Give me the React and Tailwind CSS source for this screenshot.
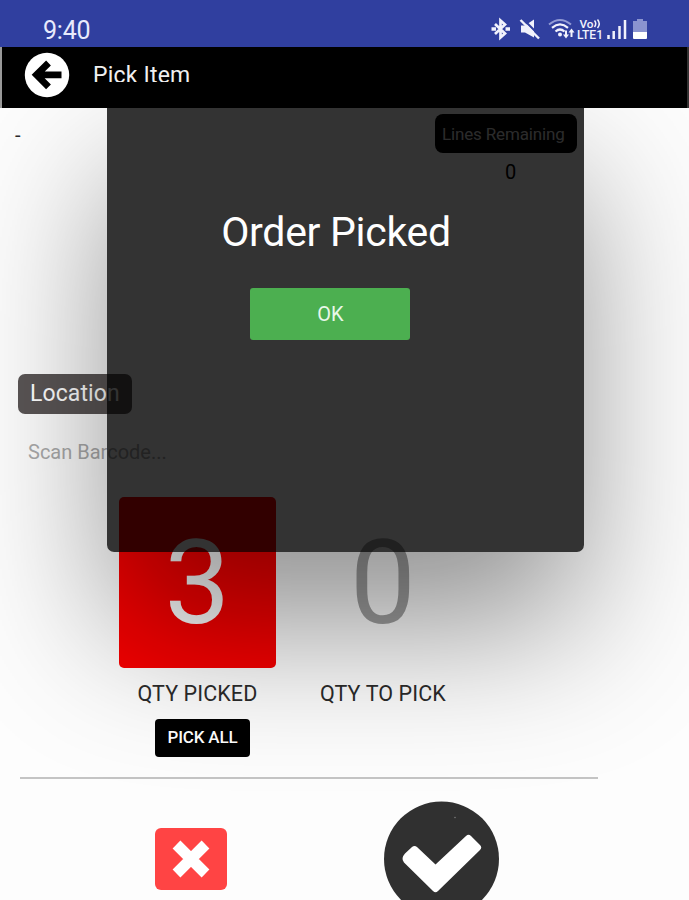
function StatusIcons() {
  return (
    <svg className="ml-[397px] mt-[17px] h-6 w-40" viewBox="0 0 160 24" fill="none" stroke="#f1f2fc">
      {/* bluetooth */}
      <path d="M5 7 15 16.500 10.500 20.500V3.500L15 7.500 5 17" strokeWidth="2.700" />
      <path d="M1.500 12H6M15.500 12H20" strokeWidth="3.400" />
      {/* muted speaker */}
      <path d="M31 8.500h4l9-6v18l-9-5h-4z" fill="#f1f2fc" stroke="none" />
      <path d="M32.500 1.500 51 20" stroke="#303f9f" strokeWidth="2.200" />
      <path d="M30.500 3 49 21.500" strokeWidth="2.400" />
      {/* wifi */}
      <path d="M59 7.500Q70 -1.500 81 7.500" strokeWidth="2" stroke="#929bd5" />
      <path d="M62 10.800Q70 4 78 10.800M65.500 14.500Q70 10.500 74.500 14.500" strokeWidth="2.200" />
      <circle cx="70" cy="17.500" r="2" fill="#f1f2fc" stroke="none" />
      <path d="M76 13.500v6M81.500 20v-6" strokeWidth="2" />
      <path d="m73 17.500 3 4 3-4zM78.500 15.500l3-4 3 4z" fill="#f1f2fc" stroke="none" />
      {/* carrier */}
      <g fill="#f1f2fc" stroke="none" fontFamily="Roboto, sans-serif" fontWeight="500">
        <text x="89.500" y="10.500" fontSize="11" textLength="14" lengthAdjust="spacingAndGlyphs">Vo</text>
        <text x="87" y="22" fontSize="12" textLength="26" lengthAdjust="spacingAndGlyphs">LTE1</text>
      </g>
      <path d="M104.500 3.500q2.500 3 0 6.500M107.500 2.500q3.500 4.300 0 8.500" strokeWidth="1.500" />
      {/* signal */}
      <path d="M118.500 18v4M123.700 14v8M129.500 9v13M135 3v19" strokeWidth="2.500" />
      {/* battery */}
      <path d="M147 2h6v2h4v11h-14V4h4z" fill="#8b94d0" stroke="none" />
      <path d="M143 15h14v6q0 1-1 1h-12q-1 0-1-1z" fill="#fff" stroke="none" />
    </svg>
  );
}

function Header() {
  return (
    <header className="relative z-20 h-[108px] bg-black">
      <div className="flex h-[47px] bg-[#303f9f]">
        <span className="ml-[43px] mt-[16px] w-[50px] text-[25px] leading-[30px] tracking-[-0.2px] text-[#e8eafc]">9:40</span>
        <StatusIcons />
      </div>
      <div className="flex h-[61px] border-x-2 border-l-[#999] border-r-[#333]">
        <svg className="ml-[22px] mt-[5px] h-[46px] w-[46px]" viewBox="0 0 46 46">
          <circle cx="23" cy="23" r="22.200" fill="#fff" />
          <path d="M37.500 22.800H13M24.500 11 12.500 22.800l12 12" fill="none" stroke="#000" strokeWidth="6.800" />
        </svg>
        <h1 className="ml-[23px] mt-[13px] h-[22px] overflow-hidden text-[23px] leading-[31px] tracking-[0.2px] text-[#f0f0f0]">Pick Item</h1>
      </div>
    </header>
  );
}

function Modal() {
  return (
    <div className="absolute left-[107px] top-[98px] z-10 flex h-[454px] w-[477px] flex-col items-center rounded-[7px] bg-black/80 pr-[32px] pt-[107px] shadow-[0_78px_150px_-4px_rgba(0,0,0,0.43)]">
      <h2 className="ml-[13px] whitespace-nowrap text-[41px] leading-[54px] tracking-[-0.3px] text-white">Order Picked</h2>
      <button className="mt-[29px] h-[52px] w-[160px] shrink-0 rounded-[3px] bg-[#4caf50] pl-[2px] text-[20px] text-[#e9f7e9]">OK</button>
    </div>
  );
}

export default function App() {
  return (
    <div className="relative h-[900px] w-[689px] overflow-hidden bg-[#fdfdfd] font-[Roboto,sans-serif] text-[#2b2b2b]">
      <Header />
      <Modal />
      <section className="flex h-[266px] justify-between pr-[112px]">
        <span className="ml-[15px] mt-[14px] text-[20px] leading-[26px]">-</span>
        <div className="mt-[6px] flex w-[142px] flex-col items-center">
          <span className="flex h-[39px] w-full items-center rounded-[8px] bg-black pl-[7px] pt-[2px] text-[17px] tracking-[-0.150px] text-[#d8d8d8]">Lines Remaining</span>
          <span className="ml-[9px] mt-[6px] text-[20px] leading-[26px] text-black">0</span>
        </div>
      </section>
      <section className="h-[123px] pl-[18px]">
        <div className="flex h-[40px] w-[114px] items-center rounded-[7px] bg-[#5a5555] pl-[12px] text-[23px] tracking-[0.100px] text-white">Location</div>
        <div className="ml-[10px] mt-[25px] text-[20px] leading-[26px] text-[#aaa]">Scan Barcode...</div>
      </section>
      <section className="flex h-[281px] pl-[119px]">
        <div className="flex w-[157px] flex-col items-center">
          <div className="h-[171px] w-[157px] rounded-[5px] bg-[#f80000] text-center text-[117px] leading-[173px] text-white">3</div>
          <div className="mt-[13px] whitespace-nowrap text-[21.500px] leading-[26px] tracking-[0.100px]">QTY PICKED</div>
          <button className="ml-[10px] mt-[12px] h-[38px] w-[95px] rounded-[4px] bg-black text-[17px] font-medium tracking-[-0.200px] text-white">PICK ALL</button>
        </div>
        <div className="ml-[28px] flex w-[158px] flex-col items-center">
          <div className="h-[171px] text-[117px] leading-[173px] text-[#a0a0a0]">0</div>
          <div className="mt-[13px] whitespace-nowrap text-[21.500px] leading-[26px] tracking-[0.100px]">QTY TO PICK</div>
        </div>
      </section>
      <div className="relative -mt-px ml-[20px] h-[2px] w-[578px] bg-[#c4c4c4]" />
      <footer className="relative z-20 flex pl-[155px]">
        <svg className="mt-[49px] h-[63px] w-[72px]" viewBox="0 0 72 63">
          <rect width="72" height="62" rx="6" fill="#ff4444" />
          <path d="m21.500 16.500 29 29M50.500 16.500l-29 29" stroke="#fff" strokeWidth="11" />
        </svg>
        <svg className="ml-[157px] mt-[21px] h-[116px] w-[116px]" viewBox="0 0 116 116">
          <circle cx="57.500" cy="59" r="57.500" fill="#303030" />
          <path d="M21 53.500 28 47q2.500-2 5 0l18.500 17.500L82 36q2.500-2.500 5 0l9 9q2.500 2.500 0 5L54 91q-2.500 2.500-5 0L20 62.500q-3.500-4 1-9z" fill="#fff" />
          <circle cx="71" cy="17.500" r="0.700" fill="#888" />
        </svg>
      </footer>
    </div>
  );
}
